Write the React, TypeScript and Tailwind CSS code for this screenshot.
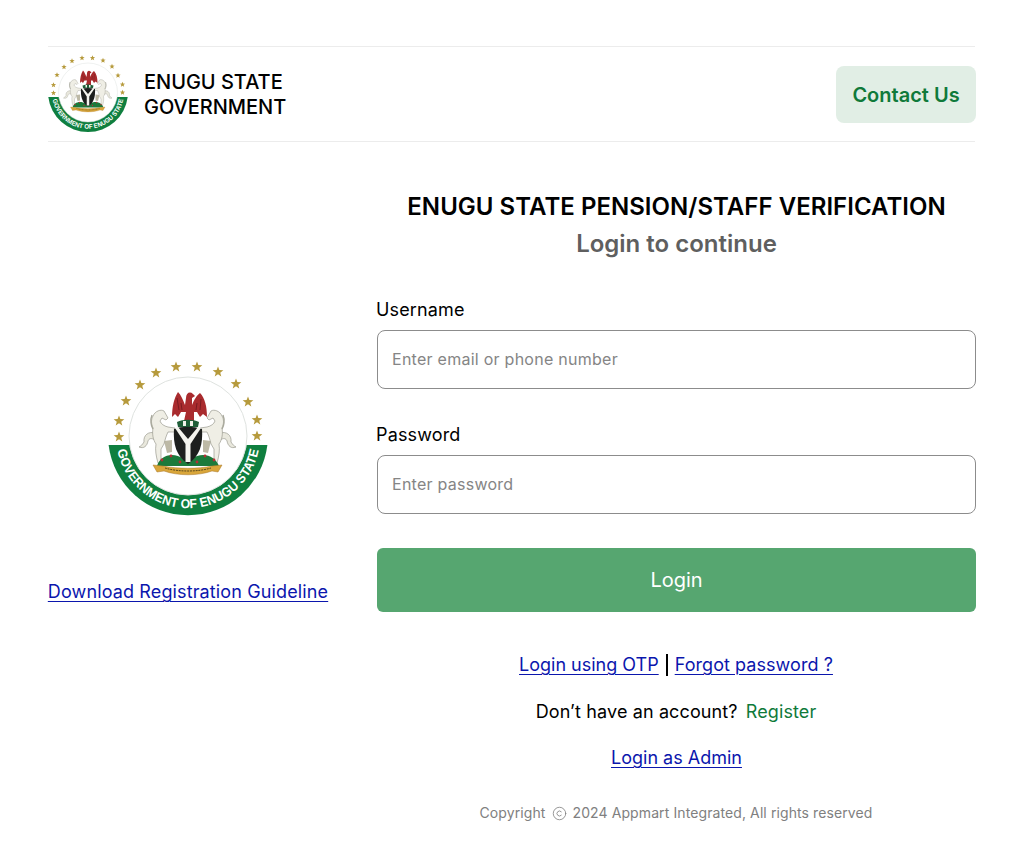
import React, { useId } from "react";
import { Copyright } from "lucide-react";

const stars = [
  [119, 437], [119, 421], [126, 401], [140, 385], [156, 373], [176, 367],
  [197, 367], [218, 372], [236, 384], [248, 402], [257, 420], [257, 436],
];

const flowers = [
  [162, 460], [171, 456], [180, 462], [197, 462], [205, 456], [214, 460],
];

function starPoints(cx: number, cy: number, r: number) {
  const pts: string[] = [];
  for (let i = 0; i < 10; i++) {
    const rad = i % 2 === 0 ? r : r * 0.42;
    const a = -Math.PI / 2 + (i * Math.PI) / 5;
    pts.push(`${(cx + rad * Math.cos(a)).toFixed(2)},${(cy + rad * Math.sin(a)).toFixed(2)}`);
  }
  return pts.join(" ");
}

function Horse() {
  return (
    <g>
      <path d="M164 441 L172 440 L172 452 L167 453 Z" fill="#bdb9a6" />
      <path
        d="M155 433 C149 431 143 435 144 442 C142 445 141 446 139 447 C144 449 147 446 148 441 C149 438 152 438 155 440 Z"
        fill="#e9e8dd"
        stroke="#8c8c80"
        strokeWidth="0.6"
      />
      <path
        d="M153 416 C155 411 161 409 164 411 L168 418 L166 420 L162 418 L160 421 C161 424 164 426 168 427 L175 428 L175 432 L168 432 C166 436 165 440 164 444 L161 449 L161 463 L158 463 C156 456 155 450 156 444 C153 440 152 434 153 428 C151 424 151 419 153 416 Z"
        fill="#efeee5"
        stroke="#8c8c80"
        strokeWidth="0.6"
      />
      <path d="M152 415 C150 420 151 426 153 429" fill="none" stroke="#a8a89b" strokeWidth="1.4" />
    </g>
  );
}

function Emblem({ className }: { className: string }) {
  const id = useId();
  return (
    <svg viewBox="108 361 160 156" className={className}>
      <defs>
        <path id={id} d="M 116.8 447 A 72 72 0 0 0 259.2 447" />
      </defs>
      {stars.map(([x, y]) => (
        <polygon key={`${x}-${y}`} points={starPoints(x, y, 5.6)} fill="#b69a3c" />
      ))}
      {/* green band */}
      <path d="M 108.6 445 L 267.4 445 A 80 80 0 0 1 108.6 445 Z" fill="#0f7f3f" />
      <circle cx="188" cy="436" r="59" fill="#ffffff" stroke="#dfe3e0" strokeWidth="1" />
      <text fill="#ffffff" fontFamily="Liberation Sans, sans-serif" fontWeight="700" fontSize="13">
        <textPath href={`#${id}`} startOffset="50%" textAnchor="middle" textLength="198" lengthAdjust="spacingAndGlyphs">
          GOVERNMENT OF ENUGU STATE
        </textPath>
      </text>
      {/* eagle */}
      <path
        d="M172 417 C172 407 174 398 178 392 C181 395 183 400 185 405 L186 398 C186 393 190 391 193 394 L195 396 L192 398 L192 405 C194 400 197 395 200 393 C205 398 207 407 207 417 L203 414 L200 417 L197 412 L194 412 L194 421 L184 421 L186 412 L181 412 L178 417 L175 414 Z"
        fill="#a92b2e"
      />
      <path d="M177 398 L179 410 M181 403 L182 410 M201 399 L200 410 M197 403 L196 410" stroke="#741a1f" strokeWidth="0.9" />
      {/* torse */}
      <path d="M177 422 C183 419 193 419 199 422 L198 427 L178 427 Z" fill="#1f5e38" />
      <path d="M183 421 H186 V426 H183 Z M190 421 H193 V426 H190 Z" fill="#f2f2ea" />
      {/* horses */}
      <Horse />
      <g transform="matrix(-1 0 0 1 375 0)">
        <Horse />
      </g>
      {/* grass */}
      <path d="M157 466 C160 456 172 451 184 459 L191 459 C203 451 215 456 219 466 Z" fill="#1c7a3b" />
      {flowers.map(([x, y]) => (
        <circle key={`${x}-${y}`} cx={x} cy={y} r="1.4" fill="#b33035" />
      ))}
      {/* shield */}
      <path
        d="M174 429 C182 426 193 426 202 429 C203 444 200 456 188 464 C176 456 173 444 174 429 Z"
        fill="#1d1f1e"
      />
      <path d="M175 428 L178 427 L188 439 L198 427 L201 428 L190.5 444 L190.5 462 L185.5 462 L185.5 444 Z" fill="#f4f4ee" />
      {/* ribbon */}
      <path d="M153 465 L163 466 C178 469 198 469 212 466 L222 465 L218 472 L212 471 C198 476 178 476 164 471 L157 472 Z" fill="#d9a63a" stroke="#a9762a" strokeWidth="0.5" />
      <path d="M165 468 C178 472 198 472 211 468" fill="none" stroke="#5d4a1c" strokeWidth="1" strokeDasharray="2 0.8" />
    </svg>
  );
}

function BlueLink({ children, className }: { children: React.ReactNode; className?: string }) {
  return (
    <a
      href="#"
      className={`whitespace-nowrap text-[18px] leading-[26px] text-[#0b16ad] underline decoration-1 underline-offset-[3px] ${className ?? ""}`}
    >
      {children}
    </a>
  );
}

export default function App() {
  return (
    <div className="min-h-[867px] bg-white px-12 pt-[46px] text-black [font-family:Inter,sans-serif]">
      <header className="mr-[1px] flex h-[96px] items-center justify-between border-y border-[#ececec]">
        <div className="flex items-center gap-4">
          <Emblem className="h-[80px] w-[80px]" />
          <div className="pt-[2px] text-[20px] font-medium leading-[25px] tracking-[-0.02px]">
            ENUGU STATE
            <br />
            GOVERNMENT
          </div>
        </div>
        <a
          href="#"
          className="mr-[-1px] flex h-[57px] w-[140px] items-center justify-center rounded-lg bg-[#e1eee5] pt-[1px] text-[20px] font-semibold text-[#0f7a3a]"
        >
          Contact Us
        </a>
      </header>

      <main className="flex">
        <aside className="flex w-[280px] flex-col items-center pt-[219px]">
          <Emblem className="h-[156px] w-[160px]" />
          <div className="mt-[62px]">
            <BlueLink className="tracking-[0.13px]">Download Registration Guideline</BlueLink>
          </div>
        </aside>

        <section className="ml-[49px] w-[599px] pt-[50px]">
          <h1 className="text-center text-[24px] font-semibold leading-[30px] tracking-[0.03px]">
            ENUGU STATE PENSION/STAFF VERIFICATION
          </h1>
          <h2 className="mt-[7px] text-center text-[24px] font-semibold leading-[30px] text-[#5f5f5f]">
            Login to continue
          </h2>

          <label className="ml-[-1px] mt-[38px] block text-[18px] leading-[26px] tracking-[0.15px]">Username</label>
          <input
            className="mt-[7px] block h-[59px] w-full rounded-lg border border-[#8c8c8c] pb-[2px] pl-[14px] pr-[15px] text-[16px] tracking-[0.26px] outline-none placeholder:text-[#858585]"
            placeholder="Enter email or phone number"
          />

          <label className="ml-[-1px] mt-[33px] block text-[18px] leading-[26px] tracking-[0.15px]">Password</label>
          <input
            className="mt-[7px] block h-[59px] w-full rounded-lg border border-[#8c8c8c] pb-[2px] pl-[14px] pr-[15px] text-[16px] tracking-[0.26px] outline-none placeholder:text-[#858585]"
            placeholder="Enter password"
          />

          <button className="mt-[34px] block h-[64px] w-full rounded-md bg-[#56a670] text-[20px] text-white">
            Login
          </button>

          <div className="mr-[1px] mt-[40px] flex items-center justify-center gap-[7px]">
            <BlueLink>Login using OTP</BlueLink>
            <span className="h-[22px] w-[2px] bg-black" />
            <BlueLink className="tracking-[0.06px]">Forgot password ?</BlueLink>
          </div>

          <p className="mr-[1px] mt-[21px] text-center text-[18px] leading-[26px] tracking-[0.12px]">
            Don’t have an account?
            <a href="#" className="ml-2 text-[#0f7a3a]">Register</a>
          </p>

          <div className="mt-[20px] text-center">
            <BlueLink>Login as Admin</BlueLink>
          </div>

          <p className="mr-[1px] mt-[32px] flex items-center justify-center text-[14px] leading-[20px] tracking-[0.1px] text-[#808080]">
            Copyright
            <Copyright size={15} strokeWidth={1.3} className="mx-[6px]" />
            2024 Appmart Integrated, All rights reserved
          </p>
        </section>
      </main>
    </div>
  );
}
